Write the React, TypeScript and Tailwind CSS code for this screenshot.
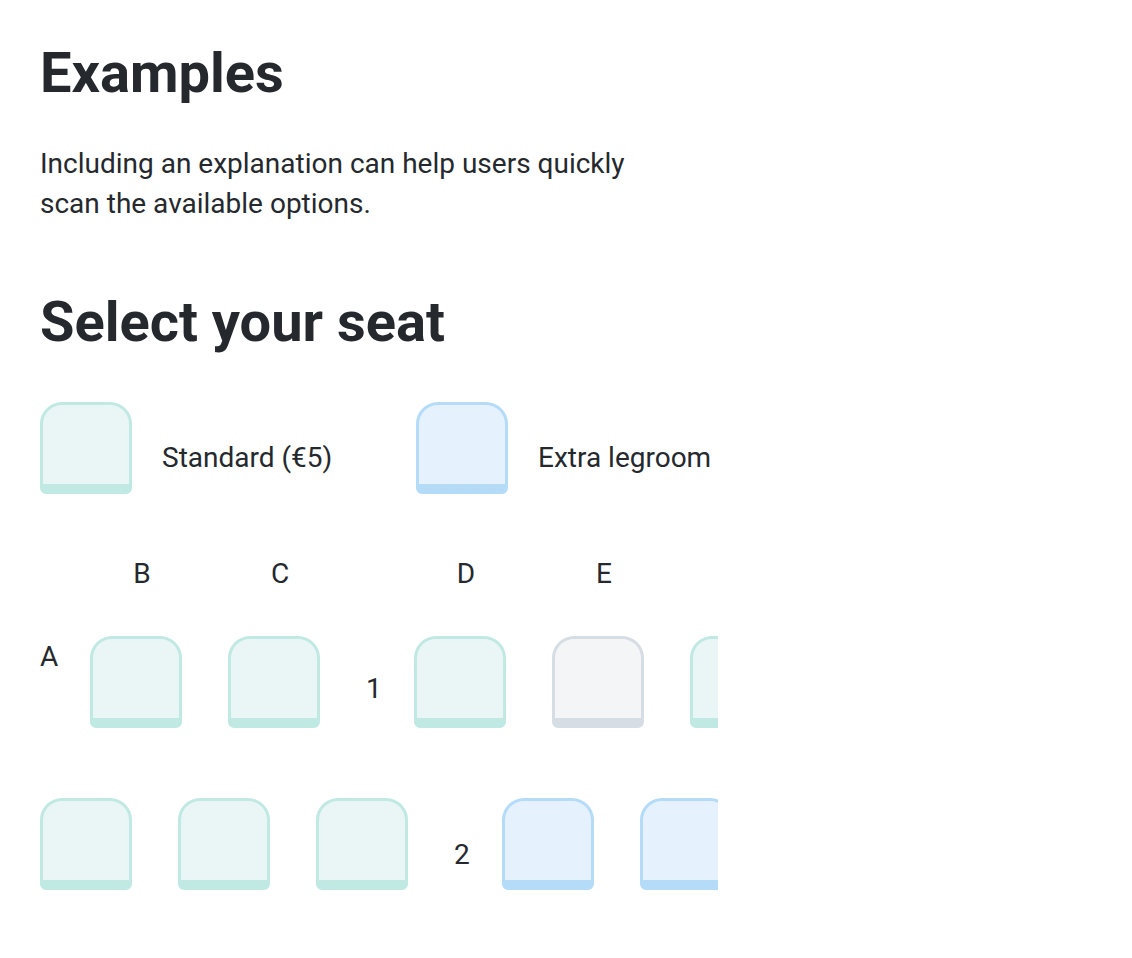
import React from "react";

type Kind = "standard" | "extra" | "taken";

const seatStyles: Record<Kind, string> = {
  standard: "border-[#c1e9e4] bg-[#eaf6f6]",
  extra: "border-[#b4dbf7] bg-[#e5f2fd]",
  taken: "border-[#d6dde4] bg-[#f4f5f7]",
};

function Seat({ kind = "standard" }: { kind?: Kind }) {
  return (
    <div
      className={`h-[92px] w-[92px] shrink-0 rounded-t-[22px] rounded-b-[6px] border-[3px] border-b-[10px] ${seatStyles[kind]}`}
    />
  );
}

function Gap() {
  return <div className="w-[46px] shrink-0" />;
}

function RowLabel({ children, pl, pt }: { children: React.ReactNode; pl: string; pt: string }) {
  return (
    <div className={`w-[94px] shrink-0 text-[28px] leading-[38px] ${pl} ${pt}`}>{children}</div>
  );
}

function ColHead({ children }: { children: React.ReactNode }) {
  return <div className="w-[92px] shrink-0 text-center">{children}</div>;
}

export default function App() {
  return (
    <div
      className="min-h-screen bg-white px-10 pt-10 text-[#25292e]"
      style={{ fontFamily: "Roboto, 'Liberation Sans', sans-serif" }}
    >
      <h1 className="text-[56px] font-bold leading-[1.2]">Examples</h1>
      <p className="mt-[37px] max-w-[640px] text-[28px] leading-[40px]">
        Including an explanation can help users quickly scan the available options.
      </p>

      <h2 className="mt-[65px] text-[56px] font-bold leading-[1.2]">Select your seat</h2>

      {/* legend */}
      <div className="mt-[46px] flex items-start">
        <div className="flex w-[376px] items-start gap-[30px]">
          <Seat />
          <span className="pt-[37px] text-[28px] leading-[38px]">Standard (€5)</span>
        </div>
        <div className="flex items-start gap-[30px]">
          <Seat kind="extra" />
          <span className="pt-[37px] text-[28px] leading-[38px]">Extra legroom</span>
        </div>
      </div>

      {/* seat map */}
      <div className="mt-[61px] w-[678px] overflow-hidden">
        <div className="flex text-[28px] leading-[38px]">
          <div className="w-[56px] shrink-0" />
          <ColHead>B</ColHead>
          <Gap />
          <ColHead>C</ColHead>
          <div className="w-[94px] shrink-0" />
          <ColHead>D</ColHead>
          <Gap />
          <ColHead>E</ColHead>
        </div>

        <div className="mt-[43px] flex items-start">
          <div className="w-[50px] shrink-0 pt-[2px] text-[28px] leading-[38px]">A</div>
          <Seat />
          <Gap />
          <Seat />
          <RowLabel pl="pl-[46px]" pt="pt-[34px]">1</RowLabel>
          <Seat />
          <Gap />
          <Seat kind="taken" />
          <Gap />
          <Seat />
        </div>

        <div className="mt-[70px] flex items-start">
          <Seat />
          <Gap />
          <Seat />
          <Gap />
          <Seat />
          <RowLabel pl="pl-[46px]" pt="pt-[38px]">2</RowLabel>
          <Seat kind="extra" />
          <Gap />
          <Seat kind="extra" />
        </div>
      </div>
    </div>
  );
}
